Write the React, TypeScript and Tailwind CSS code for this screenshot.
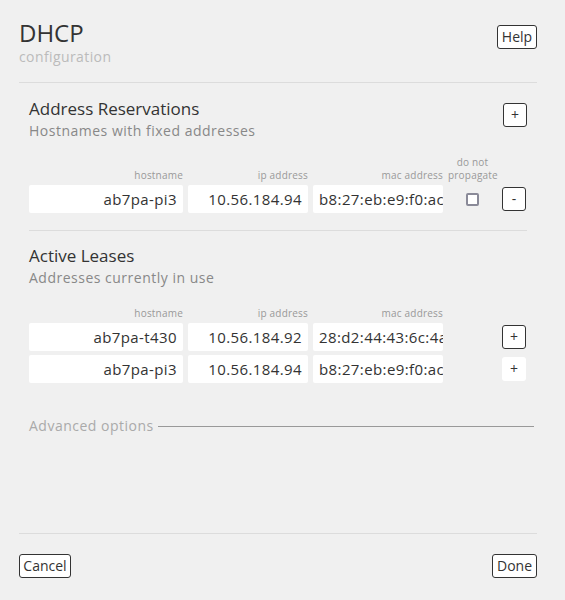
import React from "react";

const font = { fontFamily: "'Open Sans', 'Noto Sans', sans-serif" };

function Btn({ children, bordered = true, className = "" }: { children: React.ReactNode; bordered?: boolean; className?: string }) {
  return (
    <div
      className={
        "shrink-0 flex items-center justify-center bg-white rounded-[3px] text-[14px] text-[#333] leading-none " +
        (bordered ? "border border-[#333] " : "") +
        className
      }
    >
      {children}
    </div>
  );
}

function Field({ value, align = "right", w }: { value: string; align?: "right" | "left"; w: string }) {
  return (
    <div
      className={
        "shrink-0 h-[28px] bg-white rounded-[2px] flex items-center overflow-hidden whitespace-nowrap text-[15px] tracking-[0.4px] text-[#333] px-[6px] " +
        w +
        (align === "right" ? " justify-end" : " justify-start")
      }
    >
      {value}
    </div>
  );
}

function Labels({ propagate }: { propagate?: boolean }) {
  return (
    <div className="flex items-end gap-[5px] text-[10px] text-[#999] leading-[13px] tracking-[0.2px]">
      <div className="shrink-0 w-[154px] text-right">hostname</div>
      <div className="shrink-0 w-[120px] text-right">ip address</div>
      <div className="shrink-0 w-[130px] text-right">mac address</div>
      {propagate && <div className="shrink-0 w-[49px] text-center">do not<br />propagate</div>}
    </div>
  );
}

export default function App() {
  return (
    <div className="w-[565px] h-[600px] bg-[#f0f0f0] flex flex-col" style={font}>
      <div className="pl-[19px] pr-[28px] pt-[18px] flex justify-between items-start">
        <div>
          <div className="text-[24px] leading-[30px] text-[#333]">DHCP</div>
          <div className="text-[14px] leading-[16px] text-[#bbb] mt-[1px] tracking-[0.4px]">configuration</div>
        </div>
        <Btn className="w-[40px] h-[24px] mt-[7px]">Help</Btn>
      </div>
      <div className="ml-[19px] mr-[28px] mt-[17px] h-px bg-[#dcdcdc]" />

      <div className="pl-[29px] pr-[38px]">
        <div className="flex justify-between items-start mt-[16px]">
          <div>
            <div className="text-[17px] leading-[20px] text-[#333]">Address Reservations</div>
            <div className="text-[14px] leading-[16px] text-[#888] mt-[4px] tracking-[0.5px]">Hostnames with fixed addresses</div>
          </div>
          <Btn className="w-[24px] h-[24px] mt-[4px]">+</Btn>
        </div>
        <div className="mt-[17px]">
          <Labels propagate />
        </div>
        <div className="flex items-center gap-[5px] mt-[3px]">
          <Field value="ab7pa-pi3" w="w-[154px]" />
          <Field value="10.56.184.94" w="w-[120px]" />
          <Field value="b8:27:eb:e9:f0:ac" align="left" w="w-[130px]" />
          <div className="shrink-0 w-[49px] flex justify-center">
            <div className="w-[13px] h-[13px] border-2 border-[#8a8a98] rounded-[2px] bg-white" />
          </div>
          <Btn className="w-[24px] h-[24px]">-</Btn>
        </div>
        <div className="mt-[17px] h-px bg-[#dcdcdc]" />

        <div className="mt-[15px]">
          <div className="text-[17px] leading-[20px] text-[#333]">Active Leases</div>
          <div className="text-[14px] leading-[16px] text-[#888] mt-[4px] tracking-[0.5px]">Addresses currently in use</div>
        </div>
        <div className="mt-[21px]">
          <Labels />
        </div>
        <div className="flex items-center gap-[5px] mt-[3px]">
          <Field value="ab7pa-t430" w="w-[154px]" />
          <Field value="10.56.184.92" w="w-[120px]" />
          <Field value="28:d2:44:43:6c:4a" align="left" w="w-[130px]" />
          <div className="shrink-0 w-[49px]" />
          <Btn className="w-[24px] h-[24px]">+</Btn>
        </div>
        <div className="flex items-center gap-[5px] mt-[4px]">
          <Field value="ab7pa-pi3" w="w-[154px]" />
          <Field value="10.56.184.94" w="w-[120px]" />
          <Field value="b8:27:eb:e9:f0:ac" align="left" w="w-[130px]" />
          <div className="shrink-0 w-[49px]" />
          <Btn bordered={false} className="w-[24px] h-[24px]">+</Btn>
        </div>

        <div className="flex items-center mt-[35px] mr-[-7px]">
          <div className="text-[14px] leading-[16px] text-[#aaa] tracking-[0.5px]">Advanced options</div>
          <div className="flex-1 h-px bg-[#999] ml-[4px]" />
        </div>
      </div>

      <div className="flex-1" />
      <div className="ml-[19px] mr-[28px] h-px bg-[#dcdcdc]" />
      <div className="pl-[19px] pr-[28px] flex justify-between mt-[20px] mb-[22px]">
        <Btn className="w-[52px] h-[24px]">Cancel</Btn>
        <Btn className="w-[45px] h-[24px]">Done</Btn>
      </div>
    </div>
  );
}
